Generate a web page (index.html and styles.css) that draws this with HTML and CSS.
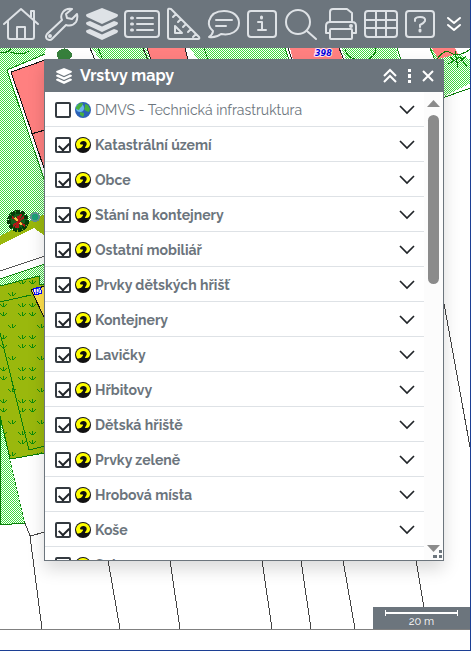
FILE: index.html
```html
<!DOCTYPE html>
<html lang="cs">
<head>
    <meta charset="UTF-8">
    <meta name="viewport" content="width=device-width, initial-scale=1.0">
    <title>Vrstvy mapy</title>
    <link rel="stylesheet" href="styles.css">
</head>
<body>
<svg class="defs" width="0" height="0" aria-hidden="true">
    <symbol id="layers" viewBox="0 0 34 32">
        <path d="M17 0 32 6q2 1 0 3L17 16 2 9q-2-2 0-3z"/>
        <path d="M5 13 17 18.500 29 13 32 14q2 1 0 3L17 24 2 17q-2-2 0-3z"/>
        <path d="M5 21 17 26.500 29 21 32 22q2 1 0 3L17 32 2 25q-2-2 0-3z"/>
    </symbol>
    <symbol id="chevron" viewBox="0 0 16 10">
        <path d="M1 1 8 8 15 1" fill="none" stroke="#212529" stroke-width="1.700"/>
    </symbol>
    <symbol id="theme" viewBox="0 0 16 16">
        <circle cx="8" cy="8" r="8" fill="#111"/>
        <path d="M1 8C1 4 4 1 8 1s7 3 7 6c0 2-1 4-4 4H5q-2 1-3 0z" fill="#ffff00"/>
        <path d="M4 14c0-3 4-4 4-6 0-1-2 0-3-1 0-3 4-4 6-2 2 3-1 4-1 6l2 3z" fill="#111"/>
    </symbol>
    <symbol id="globe" viewBox="0 0 16 16">
        <circle cx="8" cy="8" r="8" fill="#2b62b8"/>
        <circle cx="5" cy="6" r="4" fill="#6cb4f0"/>
        <path d="M1 5 4 1.500 8 1 7 4 5 6 4 8 1 7zM10 2l3 1 2 4-1 3-3-1-2-2 1-2zM5 10l4 1 0 2-1 2-3-2z" fill="#46b03f"/>
    </symbol>
</svg>

<div class="app">
    <nav class="toolbar">
        <button title="Domů"><svg width="38" height="36" viewBox="0 0 38 36"><path d="M2 18 19 3l17 15M6 15v16q0 2 2 2h22q2 0 2-2V15M29 11V5h3v9M15 33V21h8v12"/></svg></button>
        <button title="Nástroje"><svg width="36" height="36" viewBox="0 0 36 36"><path d="M28 3q-6-1-9 3-3 4-1 8L3 28q-2 3 0 5 3 2 5 0l14-14q6 2 10-3 2-4 1-8l-5 5-5-1-1-4z"/><circle cx="6" cy="30" r="1"/></svg></button>
        <button title="Vrstvy" class="full"><svg width="34" height="32"><use href="#layers"/></svg></button>
        <button title="Legenda"><svg width="38" height="36" viewBox="0 0 38 36"><rect x="2" y="5" width="34" height="26" rx="3"/><path d="M14 12h16M14 18h16M14 24h16"/><path d="M8.500 12h1M8.500 18h1M8.500 24h1" stroke-width="3"/></svg></button>
        <button title="Měření"><svg width="36" height="36" viewBox="0 0 36 36"><path d="M3 4q0-2 3-1l28 28q1 2-1 2H5q-2 0-2-2zM10 20v7h7zM8 11l3-3M13 16l3-3M18 21l3-3M23 26l3-3M28 31l3-3"/></svg></button>
        <button title="Zpráva"><svg width="36" height="36" viewBox="0 0 36 36"><path d="M7 25Q2 21 3 15C5 8 11 5 18 5c9 0 15 5 15 12 0 8-8 13-18 11q-5 4-12 3 4-3 4-6z"/><path d="M10 14h16M10 20h10"/></svg></button>
        <button title="Informace"><svg width="32" height="36" viewBox="0 0 32 36"><rect x="2" y="5" width="28" height="26" rx="3"/><path d="M12 16h4v8M12 24h8"/><path d="M15.500 11v1" stroke-width="3"/></svg></button>
        <button title="Hledat"><svg width="36" height="36" viewBox="0 0 36 36"><circle cx="15" cy="16" r="12"/><path d="m24 25 9 8"/></svg></button>
        <button title="Tisk"><svg width="36" height="36" viewBox="0 0 36 36"><path d="M7 16V6q0-3 3-3h14l5 4v9M7 27H3v-7q0-4 4-4h22q4 0 4 4v7h-4"/><rect x="7" y="23" width="22" height="10" rx="1"/><circle cx="28" cy="20" r="1"/></svg></button>
        <button title="Tabulka"><svg width="36" height="36" viewBox="0 0 36 36"><rect x="2" y="5" width="32" height="26" rx="3"/><path d="M2 14h32M2 22h32M13 5v26M23 5v26"/></svg></button>
        <button title="Nápověda"><svg width="32" height="36" viewBox="0 0 32 36"><rect x="2" y="5" width="28" height="26" rx="3"/><path d="M11 15v-2q1-2 5-2 6 0 5 4-1 2-5 4v2"/><path d="M16 24v1" stroke-width="3"/></svg></button>
        <button title="Více" class="more"><svg width="16" height="16" viewBox="0 0 16 16"><path d="m2 2 6 5 6-5M2 9l6 5 6-5"/></svg></button>
    </nav>

    <main class="map">
        <!-- map drawing, origin is the lower edge of the toolbar -->
        <svg class="map-canvas" width="471" height="581" shape-rendering="crispEdges">
            <defs>
                <pattern id="grass" width="2" height="2" patternUnits="userSpaceOnUse">
                    <rect width="2" height="2" fill="#fff"/>
                    <path d="M0 0h1v1h-1zM1 1h1v1h-1z" fill="#3fdb3f"/>
                </pattern>
                <pattern id="meadow" x="7" y="252" width="29" height="32" patternUnits="userSpaceOnUse">
                    <rect width="29" height="32" fill="#9ab80d"/>
                    <path d="M11 4l3 3M15 3v4M19 4l-3 3M22 4l3 3M25 3v4M29 4l-3 3M11 13l3 3M15 12v4M19 13l-3 3M22 13l3 3M25 12v4M29 13l-3 3M1 25l3 3M5 24v4M9 25l-3 3" stroke="#0a8a0a" fill="none"/>
                </pattern>
            </defs>
            <!-- lawns -->
            <path d="M0 0h448l23 12v23l-32 16H0z" fill="url(#grass)"/>
            <path d="M0 0h45v176L0 190z" fill="url(#grass)"/>
            <!-- buildings and roads under the toolbar -->
            <path d="M46 0h45l10 12H44zM146 0h44l8 12h-48zM285 0h56l5 12h-58zM396 0h33l6 12h-36z" fill="#fff"/>
            <path d="M45 6 7 22 45 134" fill="#fff" stroke="#108a10"/>
            <path d="M45 12 11 24 45 123" fill="#ff8080" stroke="#111"/>
            <path d="M31 86 45 82" stroke="#111"/>
            <path d="M147 0h38l3 12h-37zM290 0h49l4 12h-50zM432 0h23l3 6-20 5z" fill="#ff8080"/>
            <path d="m143 0 5 12M147 0l4 12M185 0l3 12M90 0l5 12M288 0l4 12M339 0l5 12" stroke="#222"/>
            <path d="m98 0 5 12M204 0l4 12M285 0l4 12M397 0l4 12M430 0l5 12" stroke="#108a10"/>
            <path d="M0 4q8 2 11-4M10 4q12 4 19-1M345 1q2 8 10 10M376 0q0 8-9 12M437 11q8-11 14-6t20-4M450 9l8 6 8-7M455 3l3 17M448 16l12-7 7 10" stroke="#078007" fill="none"/>
            <path d="M57 5q6-8 13-2 5 6-2 9H58z" fill="#37803c"/>
            <!-- road and meadow on the left -->
            <path d="m0 188 45-22v22L34 180 0 197z" fill="#9ab80d"/>
            <path d="M0 197 34 180l11 8v28L0 231z" fill="#fff"/>
            <path d="M0 223 45 208" stroke="#555"/>
            <path d="m0 231 45-15v60H0z" fill="url(#grass)"/>
            <path d="M0 231 45 216" stroke="#108a10"/>
            <path d="m0 238 39-10v8h6v170l-35 6L0 368z" fill="url(#meadow)"/>
            <path d="m0 238 39-10v8h6M0 254l31-7M0 285l29 117 16-4" stroke="#0a800a" fill="none"/>
            <path d="M31 242 45 238v33z" fill="#ffe04d" stroke="#111"/>
            <path d="m0 368 25 107-25 2z" fill="url(#grass)" stroke="#087c08"/>
            <path d="m10 411 35-6v176H36L25 475z" fill="#fff"/>
            <path d="m10 411 35-6" stroke="#087c08"/>
            <!-- parcels -->
            <path d="M439 50 471 38v543H439z" fill="#fff"/>
            <path d="m439 51 32-11" stroke="#087c08"/>
            <path d="M25 475 30 488 42 581M30 488l15-4M108 512l12 69M170 512l10 69M262 512l10 69M301 512l10 69M343 512l12 69M416 512l10 60M443 250l27 149" stroke="#444" fill="none"/>
            <!-- trees and labels -->
            <circle cx="18" cy="173" r="9" fill="#14601c" stroke="#063d08" stroke-width="4" stroke-dasharray="4 1"/>
            <path d="m12 169 13 9M21 166l-5 14M13 178l11-9M18 168v12" stroke="#b01818" stroke-width="2"/>
            <path d="m15 170 3 3m2 2 2 2" stroke="#f1cf3f" stroke-width="2"/>
            <circle cx="35" cy="169" r="4" fill="#1ba178" stroke="#61948f" stroke-width="2"/>
            <text class="map-number" x="315" y="8">398</text>
            <path d="m33 241 7-2 2 6-7 2z" fill="#fff" stroke="#00f"/>
            <text class="map-parking" x="35" y="247">P</text>
        </svg>

        <section class="panel">
            <header class="panel-head">
                <svg class="head-icon" width="18" height="16"><use href="#layers"/></svg>
                <h1>Vrstvy mapy</h1>
                <button title="Sbalit"><svg width="16" height="16" viewBox="0 0 16 16"><path d="m2 8 6-6 6 6M2 14l6-6 6 6"/></svg></button>
                <button title="Nabídka"><svg width="4" height="16" viewBox="0 0 4 16"><path d="M0 1h3v3H0zM0 6h3v4H0zM0 12h3v3H0z" fill="#fff" stroke="none"/></svg></button>
                <button title="Zavřít"><svg width="12" height="12" viewBox="0 0 12 12"><path d="m1 1 10 10M11 1 1 11"/></svg></button>
            </header>
            <div class="panel-body">
                <ul class="layer-list">
                    <li class="layer off"><label><input type="checkbox"><svg width="16" height="16"><use href="#globe"/></svg>DMVS - Technická infrastruktura</label><button title="Rozbalit"><svg width="16" height="10"><use href="#chevron"/></svg></button></li>
                    <li class="layer"><label><input type="checkbox" checked><svg width="16" height="16"><use href="#theme"/></svg>Katastrální území</label><button title="Rozbalit"><svg width="16" height="10"><use href="#chevron"/></svg></button></li>
                    <li class="layer"><label><input type="checkbox" checked><svg width="16" height="16"><use href="#theme"/></svg>Obce</label><button title="Rozbalit"><svg width="16" height="10"><use href="#chevron"/></svg></button></li>
                    <li class="layer"><label><input type="checkbox" checked><svg width="16" height="16"><use href="#theme"/></svg>Stání na kontejnery</label><button title="Rozbalit"><svg width="16" height="10"><use href="#chevron"/></svg></button></li>
                    <li class="layer"><label><input type="checkbox" checked><svg width="16" height="16"><use href="#theme"/></svg>Ostatní mobiliář</label><button title="Rozbalit"><svg width="16" height="10"><use href="#chevron"/></svg></button></li>
                    <li class="layer"><label><input type="checkbox" checked><svg width="16" height="16"><use href="#theme"/></svg>Prvky dětských hřišť</label><button title="Rozbalit"><svg width="16" height="10"><use href="#chevron"/></svg></button></li>
                    <li class="layer"><label><input type="checkbox" checked><svg width="16" height="16"><use href="#theme"/></svg>Kontejnery</label><button title="Rozbalit"><svg width="16" height="10"><use href="#chevron"/></svg></button></li>
                    <li class="layer"><label><input type="checkbox" checked><svg width="16" height="16"><use href="#theme"/></svg>Lavičky</label><button title="Rozbalit"><svg width="16" height="10"><use href="#chevron"/></svg></button></li>
                    <li class="layer"><label><input type="checkbox" checked><svg width="16" height="16"><use href="#theme"/></svg>Hřbitovy</label><button title="Rozbalit"><svg width="16" height="10"><use href="#chevron"/></svg></button></li>
                    <li class="layer"><label><input type="checkbox" checked><svg width="16" height="16"><use href="#theme"/></svg>Dětská hřiště</label><button title="Rozbalit"><svg width="16" height="10"><use href="#chevron"/></svg></button></li>
                    <li class="layer"><label><input type="checkbox" checked><svg width="16" height="16"><use href="#theme"/></svg>Prvky zeleně</label><button title="Rozbalit"><svg width="16" height="10"><use href="#chevron"/></svg></button></li>
                    <li class="layer"><label><input type="checkbox" checked><svg width="16" height="16"><use href="#theme"/></svg>Hrobová místa</label><button title="Rozbalit"><svg width="16" height="10"><use href="#chevron"/></svg></button></li>
                    <li class="layer"><label><input type="checkbox" checked><svg width="16" height="16"><use href="#theme"/></svg>Koše</label><button title="Rozbalit"><svg width="16" height="10"><use href="#chevron"/></svg></button></li>
                    <li class="layer"><label><input type="checkbox" checked><svg width="16" height="16"><use href="#theme"/></svg>Sekce</label><button title="Rozbalit"><svg width="16" height="10"><use href="#chevron"/></svg></button></li>
                </ul>
                <div class="scrollbar">
                    <svg width="13" height="7" viewBox="0 0 13 7"><path d="M0 7 6.500 0 13 7z"/></svg>
                    <div class="track"><div class="thumb"></div></div>
                    <svg width="13" height="7" viewBox="0 0 13 7"><path d="M0 0h13L6.500 7z"/></svg>
                </div>
            </div>
            <svg class="grip" width="9" height="9" viewBox="0 0 9 9"><path d="M6 0h3v3H6zM0 5h4v3H0zM6 5h3v3H6z"/></svg>
        </section>

        <div class="scale">
            <div class="scale-line"></div>
            <span>20 m</span>
        </div>
    </main>
    <footer class="status"></footer>
</div>
</body>
</html>
```
FILE: styles.css
```css
* {
    box-sizing: border-box;
}
body {
    margin: 0;
    font-family: Raleway, Lato, "Open Sans", sans-serif;
    font-size: 14px;
    font-variant-numeric: oldstyle-nums;
    color: #6c757d;
}
button {
    display: flex;
    align-items: center;
    justify-content: center;
    padding: 0;
    border: 0;
    background: none;
}
.defs {
    position: absolute;
}
.app {
    display: flex;
    flex-direction: column;
    height: 100vh;
    border-right: 1px solid #1c3f94;
    border-bottom: 1px solid #1c3f94;
}

/* toolbar */
.toolbar {
    display: flex;
    align-items: center;
    justify-content: space-between;
    height: 48px;
    padding: 0 8px 0 2px;
    background: #6c757d;
}
.toolbar svg {
    fill: none;
    stroke: #dee2e6;
    stroke-width: 2;
    stroke-linejoin: round;
    stroke-linecap: round;
}
.toolbar .full svg {
    fill: #dee2e6;
    stroke: none;
}
.toolbar .more {
    margin-left: 6px;
}
.toolbar .more svg {
    stroke: #fff;
}

/* map */
.map {
    position: relative;
    flex: 1;
    overflow: hidden;
    border-bottom: 1px solid #808080;
}
.map-canvas {
    display: block;
}
.map-number {
    font: italic bold 8px "DejaVu Sans", sans-serif;
    fill: #0000e0;
    stroke: #ffe8f0;
    stroke-width: 2;
    paint-order: stroke;
}
.map-parking {
    font: 8px "DejaVu Sans", sans-serif;
    fill: #0000ff;
}
.scale {
    position: absolute;
    right: 0;
    bottom: 0;
    width: 97px;
    height: 22px;
    padding: 3px 12px 0;
    background: #6c757d;
    color: #fff;
    font-size: 11px;
    line-height: 12px;
    text-align: center;
}
.scale-line {
    height: 6px;
    border: solid #fff;
    border-width: 0 1px;
    background: linear-gradient(#fff, #fff) center / 100% 2px no-repeat;
}
.scale span {
    display: block;
}
.status {
    height: 20px;
    background: #fff;
}

/* layer window */
.panel {
    position: absolute;
    top: 11px;
    right: 26px;
    bottom: 68px;
    left: 44px;
    display: flex;
    flex-direction: column;
    border: 1px solid #6c757d;
    background: #fff;
    box-shadow: 0 8px 16px rgba(0, 0, 0, 0.15);
}
.panel-head {
    display: flex;
    align-items: center;
    gap: 10px;
    height: 32px;
    padding: 0 9px 0 10px;
    background: #6c757d;
    color: #fff;
}
.panel-head h1 {
    flex: 1;
    margin: 0;
    font-size: 16px;
    line-height: 20px;
}
.panel-head .head-icon {
    margin-right: -3px;
    fill: #fff;
}
.panel-head button svg {
    fill: none;
    stroke: #fff;
    stroke-width: 2;
}
.panel-body {
    display: flex;
    flex: 1;
    min-height: 0;
}
.layer-list {
    flex: 1;
    margin: 0;
    padding: 0;
    overflow: hidden;
    list-style: none;
}
.layer {
    display: flex;
    align-items: center;
    justify-content: space-between;
    height: 35px;
    padding: 2px 9px 0 10px;
    border-bottom: 1px solid #dee2e6;
    font-weight: bold;
}
.layer.off {
    font-weight: normal;
}
.layer label {
    display: flex;
    align-items: center;
    gap: 4px;
    line-height: 20px;
}
.layer input {
    appearance: none;
    width: 16px;
    height: 16px;
    margin: 0;
    border: 2px solid #343a40;
    border-radius: 2px;
}
.layer input:checked::before {
    content: "";
    display: block;
    width: 8px;
    height: 5px;
    margin: 3px 2px;
    border: solid #212529;
    border-width: 0 0 2px 2px;
    transform: rotate(-45deg);
}
.scrollbar {
    display: flex;
    flex-direction: column;
    align-items: center;
    gap: 8px;
    width: 19px;
    padding: 8px 0;
    background: #fcfcfc;
    fill: #8b8b8b;
}
.track {
    flex: 1;
}
.thumb {
    width: 11px;
    height: 40%;
    border-radius: 6px;
    background: #8b8b8b;
}
.grip {
    position: absolute;
    right: 1px;
    bottom: 1px;
    fill: #6c757d;
}
```
